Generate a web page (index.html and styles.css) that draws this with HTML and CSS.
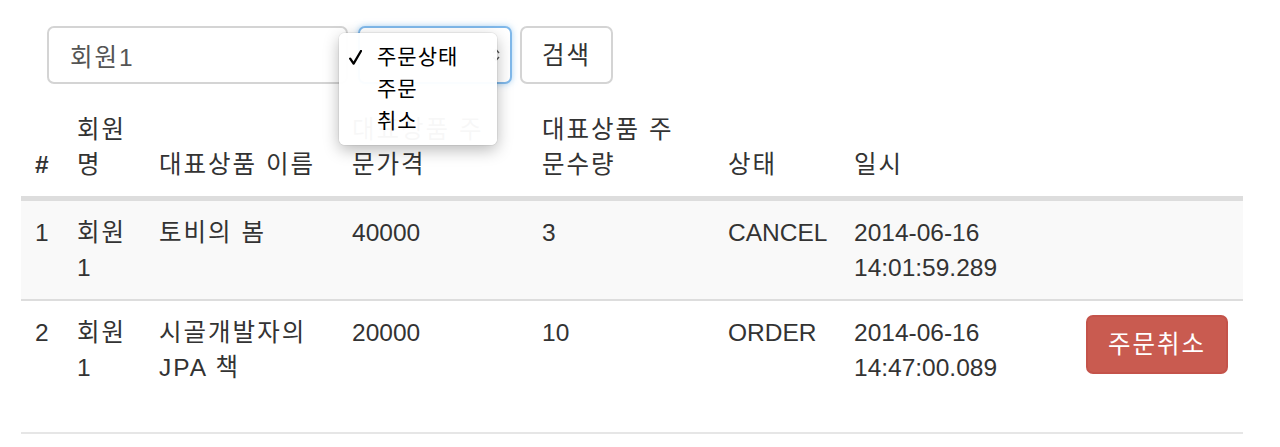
FILE: index.html
```html
<!DOCTYPE html>
<html lang="ko">
<head>
<meta charset="utf-8">
<title>주문 목록</title>
<link rel="stylesheet" href="styles.css">
</head>
<body>
<div class="page">
  <form class="search-bar">
    <input class="form-control name-input ko" type="text" value="회원1">
    <div class="form-control status-select" aria-label="주문상태">
      <svg class="select-arrows" width="8" height="16" viewBox="0 0 8 16" aria-hidden="true">
        <path d="M1 6 L4 2.5 L7 6" fill="none" stroke="#555" stroke-width="1.4"/>
        <path d="M1 10 L4 13.5 L7 10" fill="none" stroke="#555" stroke-width="1.4"/>
      </svg>
    </div>
    <button type="button" class="btn btn-default search-btn ko">검색</button>
  </form>

  <div class="select-popup ko">
    <div class="opt">
      <svg class="check" width="13" height="15" viewBox="0 0 13 15" aria-hidden="true">
        <path d="M1.2 8.6 L4.6 13.6 L12 1" fill="none" stroke="#000" stroke-width="2.3" stroke-linecap="round" stroke-linejoin="round"/>
      </svg>주문상태</div>
    <div class="opt">주문</div>
    <div class="opt">취소</div>
  </div>

  <table class="orders">
    <colgroup>
      <col class="c1"><col class="c2"><col class="c3"><col class="c4">
      <col class="c5"><col class="c6"><col class="c7"><col class="c8">
    </colgroup>
    <thead>
      <tr>
        <th class="num">#</th>
        <th class="ko">회원<br>명</th>
        <th class="ko">대표상품 이름</th>
        <th class="ko">대표상품 주<br>문가격</th>
        <th class="ko">대표상품 주<br>문수량</th>
        <th class="ko">상태</th>
        <th class="ko">일시</th>
        <th></th>
      </tr>
    </thead>
    <tbody>
      <tr>
        <td>1</td>
        <td class="ko">회원<br>1</td>
        <td class="ko">토비의 봄</td>
        <td>40000</td>
        <td>3</td>
        <td>CANCEL</td>
        <td>2014-06-16<br>14:01:59.289</td>
        <td></td>
      </tr>
      <tr>
        <td>2</td>
        <td class="ko">회원<br>1</td>
        <td class="ko">시골개발자의<br>JPA 책</td>
        <td>20000</td>
        <td>10</td>
        <td>ORDER</td>
        <td>2014-06-16<br>14:47:00.089</td>
        <td><form class="cancel-form"><button type="button" class="btn btn-danger ko">주문취소</button></form></td>
      </tr>
    </tbody>
  </table>
</div>
</body>
</html>
```

FILE: styles.css
```css
* { box-sizing: border-box; }

html, body {
  margin: 0;
  padding: 0;
  background: #fff;
}

body {
  font-family: "Liberation Sans", "Noto Sans CJK KR", sans-serif;
  font-size: 24.5px;
  line-height: 35px;
  color: #333;
}

/* Hangul glyphs of the original font run a little wider */
.ko {
  letter-spacing: 2px;
}

.page {
  position: relative;
  width: 1280px;
  height: 447px;
  overflow: hidden;
}

/* search form */
.search-bar {
  display: flex;
  align-items: flex-start;
  margin: 0;
  padding: 26px 0 0 47px;
}

.form-control {
  height: 58px;
  margin: 0;
  padding: 0 21px;
  border: 2px solid #d4d4d4;
  border-radius: 7px;
  background: #fff;
  font: inherit;
  color: #555;
  outline: none;
}

.name-input {
  width: 301px;
  letter-spacing: 2px;
}

.status-select {
  position: relative;
  width: 154px;
  margin-left: 10px;
  border-color: #7fb8ea;
  box-shadow: 0 0 6px rgba(102, 175, 233, 0.55);
}

.select-arrows {
  position: absolute;
  right: 10px;
  top: 19px;
}

.btn {
  height: 58px;
  margin: 0;
  padding: 0;
  border: 2px solid #d4d4d4;
  border-radius: 7px;
  background: #fff;
  font: inherit;
  letter-spacing: 2px;
  color: #333;
  text-align: center;
  cursor: pointer;
}

.search-btn {
  width: 93px;
  margin-left: 8px;
}

/* native select popup (open) */
.select-popup {
  position: absolute;
  left: 339px;
  top: 33px;
  width: 158px;
  height: 112px;
  padding: 8px 0;
  border-radius: 6px;
  background: rgba(255, 255, 255, 0.965);
  box-shadow: 0 5px 16px rgba(0, 0, 0, 0.28), 0 0 0 1px rgba(0, 0, 0, 0.05);
  font-size: 21px;
  line-height: 32px;
  color: #000;
  letter-spacing: 1px;
}

.opt {
  position: relative;
  height: 32px;
  padding-left: 38px;
}

.check {
  position: absolute;
  left: 10px;
  top: 9px;
}

/* table */
.orders {
  margin: 14px 0 0 21px;
  width: 1222px;
  table-layout: fixed;
  border-collapse: separate;
  border-spacing: 0;
}

.c1 { width: 42px; }
.c2 { width: 82px; }
.c3 { width: 193px; }
.c4 { width: 190px; }
.c5 { width: 186px; }
.c6 { width: 126px; }
.c7 { width: 232px; }
.c8 { width: 171px; }

.orders th,
.orders td {
  padding: 14px;
  text-align: left;
  vertical-align: top;
}

.orders th {
  vertical-align: bottom;
  font-weight: normal;
  border-bottom: 3px solid #ddd;
}

.orders th.num {
  font-weight: bold;
}

.orders td {
  border-top: 2px solid #ddd;
}

.orders tbody tr:nth-child(odd) td {
  background: #f9f9f9;
}

.orders tbody tr:last-child td {
  border-bottom: 2px solid #e6e6e6;
}

.cancel-form {
  margin: 0 0 44px;
}

.btn-danger {
  display: inline-block;
  vertical-align: top;
  width: 142px;
  height: 59px;
  border-color: #c4534a;
  background: #c95b50;
  color: #fff;
}
```
